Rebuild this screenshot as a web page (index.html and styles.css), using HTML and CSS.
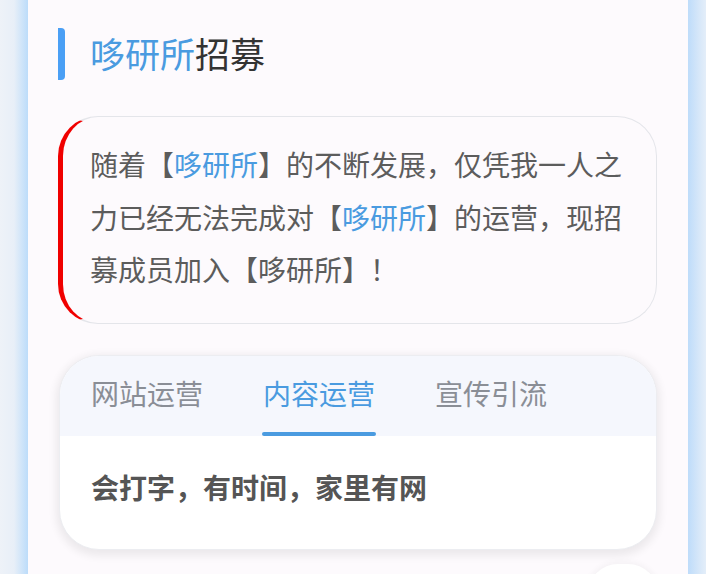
FILE: index.html
```html
<!DOCTYPE html>
<html lang="zh-CN">
<head>
    <meta charset="UTF-8">
    <meta name="viewport" content="width=device-width, initial-scale=1.0">
    <title>哆研所招募</title>
    <link rel="stylesheet" href="styles.css">
</head>
<body>

<div class="side side-left"></div>

<div class="page">
    <!-- 标题 -->
    <div class="title">
        <span class="title-bar"></span>
        <h2><span class="blue">哆研所</span>招募</h2>
    </div>

    <!-- 说明 -->
    <div class="intro">
        随着【<span class="blue">哆研所</span>】的不断发展，仅凭我一人之力已经无法完成对【<span class="blue">哆研所</span>】的运营，现招募成员加入【哆研所】！
    </div>

    <!-- 职位 -->
    <div class="tabs">
        <div class="tab-head">
            <div class="tab">网站运营</div>
            <div class="tab active">内容运营</div>
            <div class="tab">宣传引流</div>
        </div>
        <div class="tab-body">会打字，有时间，家里有网</div>
    </div>

    <div class="next"></div>
</div>

<div class="side side-right"></div>

</body>
</html>
```

FILE: styles.css
```css
html, body {
    overflow: hidden;
}

body {
    margin: 0;
    height: 574px;
    display: flex;
    font-family: "Noto Sans CJK SC", "Noto Sans", sans-serif;
    background-color: #fdfafd;
}

.side {
    flex: none;
    height: 100%;
}

.side-left {
    width: 28px;
    background: linear-gradient(to right, #eef2f8 0%, #e8eff8 50%, #bcdcfa 100%);
}

.side-right {
    width: 18px;
    background: linear-gradient(to right, #bedcfa 0%, #d6e7f9 60%, #e4eef9 100%);
}

.page {
    flex: none;
    width: 660px;
    height: 574px;
    box-sizing: border-box;
    padding: 28px 31px 0 30px;
    background-color: #fdfafd;
    position: relative;
    overflow: hidden;
}

.blue {
    color: #4a9be0;
}

.title {
    display: flex;
    align-items: center;
    height: 52px;
}

.title-bar {
    width: 7px;
    height: 52px;
    background-color: #4a9ff5;
    border-radius: 0 4px 4px 0;
    margin-right: 25px;
}

.title h2 {
    margin: 0;
    font-size: 35px;
    font-weight: normal;
    color: #333;
    line-height: 52px;
    position: relative;
    top: -1px;
}

.intro {
    margin-top: 36px;
    padding: 21px 28px 27px 27px;
    border: 1px solid #e4e5ea;
    border-left: 5px solid #f00000;
    border-radius: 40px;
    font-size: 28px;
    line-height: 52.5px;
    color: #5c5c5c;
}

.tabs {
    margin: 31px 0 0 1px;
    border: 1px solid #ecedf1;
    border-radius: 40px;
    background-color: #fff;
    overflow: hidden;
    box-shadow: 0 3px 8px 3px rgba(0, 0, 0, 0.07);
}

.tab-head {
    display: flex;
    height: 80px;
    padding-left: 1px;
    background-color: #f5f7fd;
}

.tab {
    padding: 0 30px 6px;
    font-size: 28px;
    line-height: 74px;
    color: #8a8e96;
    position: relative;
}

.tab.active {
    color: #4a9be0;
}

.tab.active:after {
    content: "";
    position: absolute;
    left: 29px;
    right: 29px;
    bottom: 0;
    height: 4px;
    border-radius: 2px;
    background-color: #4a9be0;
}

.tab-body {
    padding: 30px 31px 41px;
    font-size: 28px;
    font-weight: bold;
    line-height: 42px;
    color: #555;
}

.next {
    position: absolute;
    left: 560px;
    top: 564px;
    width: 70px;
    height: 60px;
    border-radius: 30px;
    background-color: #fff;
    box-shadow: 0 0 6px 2px rgba(0, 0, 0, 0.04);
}
```
